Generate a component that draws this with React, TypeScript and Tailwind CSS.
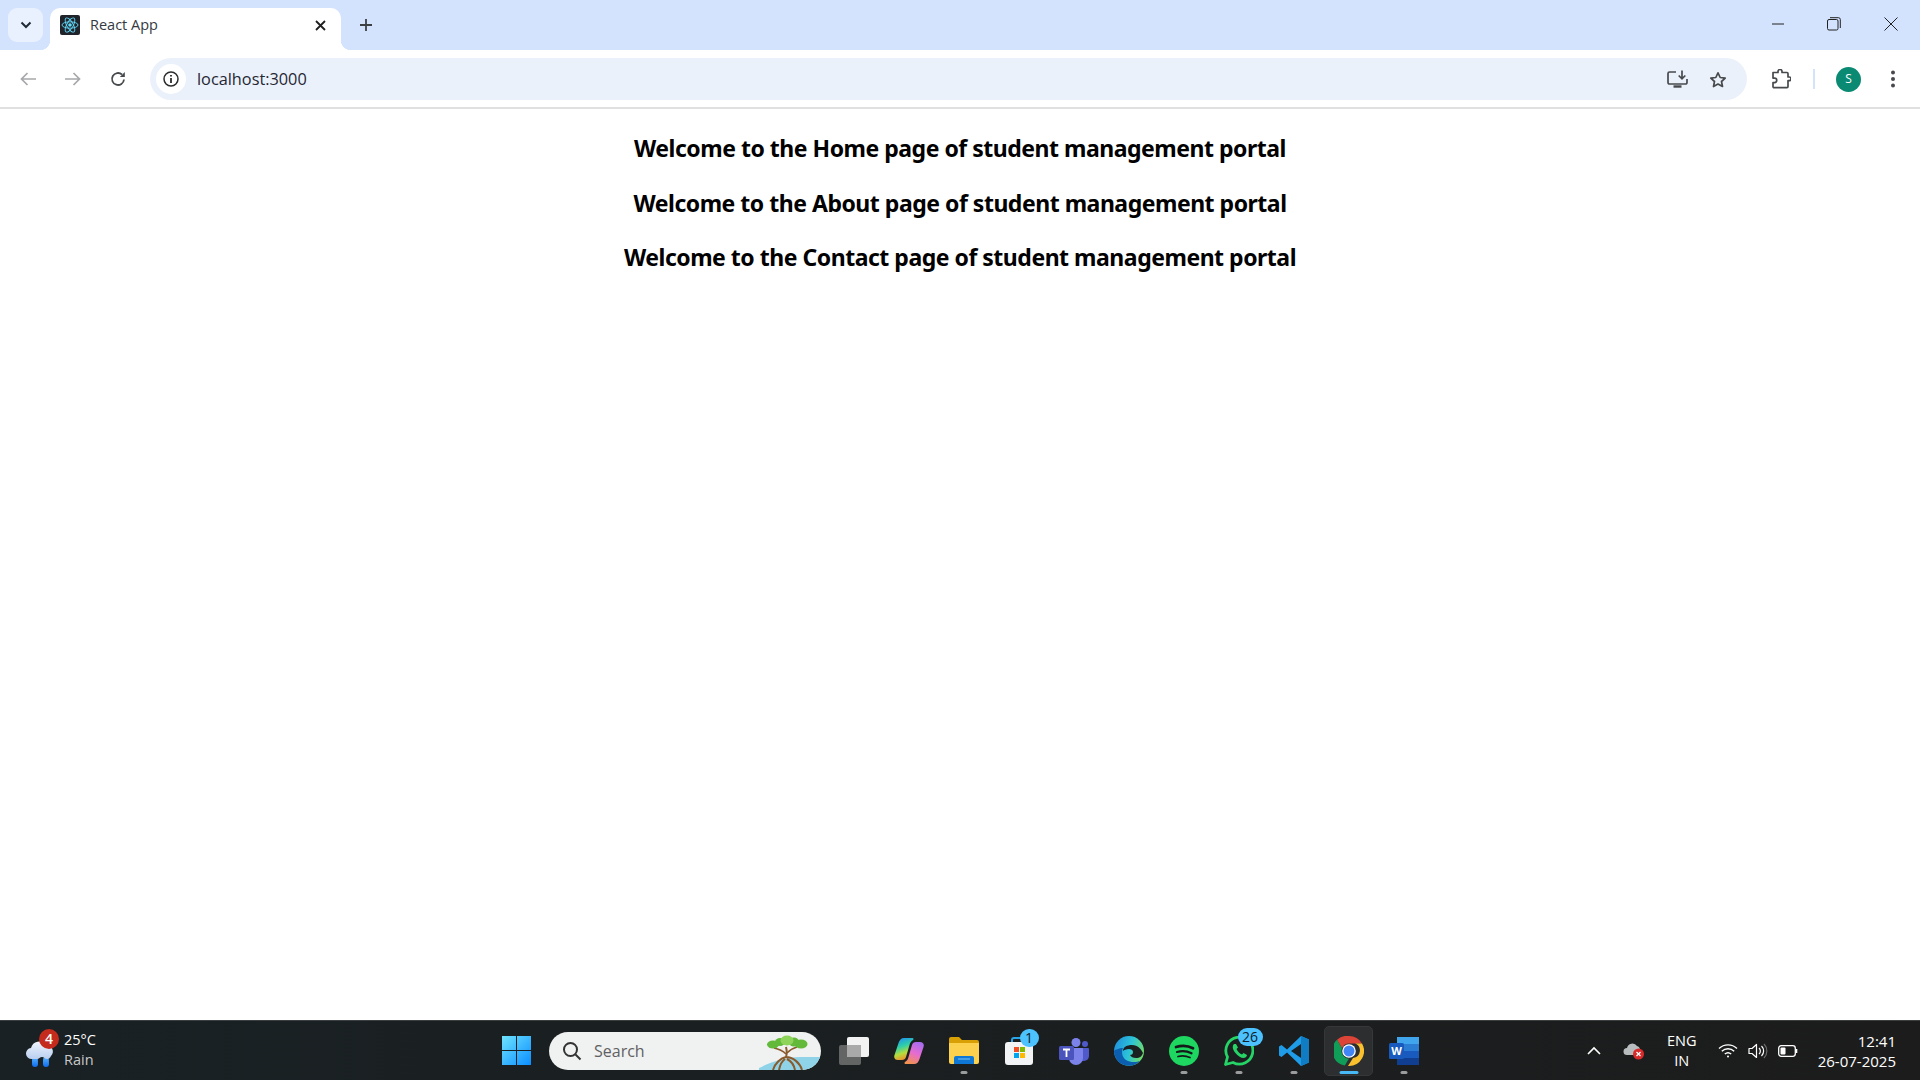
import { ReactNode } from "react";

const ui = "font-['Open_Sans','Noto_Sans',sans-serif]";

const Slot = ({ children, dot, active }: { children: ReactNode; dot?: boolean; active?: boolean }) => (
  <div className="relative flex h-[52px] w-[55px] items-center justify-center">
    {active && <div className="absolute left-[3px] top-[1px] h-[50px] w-[49px] rounded-[5px] border border-[#353839] bg-[#2c2e2f]" />}
    <div className="relative flex items-center justify-center">{children}</div>
    {dot && <div className={`absolute bottom-[3px] left-1/2 h-[3px] -translate-x-1/2 rounded-full ${active ? "w-[19px] bg-[#47b9f5]" : "w-[7px] bg-[#9a9c9d]"}`} />}
  </div>
);

const Badge = ({ children, wide }: { children: ReactNode; wide?: boolean }) => (
  <div className={`absolute top-[-8px] flex h-[18px] items-center justify-center rounded-full bg-[#4cc2ff] text-[14px] text-[#10202a] ${ui} ${wide ? "left-[14px] w-[25px]" : "left-[16px] w-[19px]"}`}>
    {children}
  </div>
);

const ReactLogo = () => (
  <svg width="20" height="20" viewBox="0 0 20 20" className="rounded-[2px] bg-[#20232a]">
    <circle cx="10" cy="10" r="1.8" fill="#61dafb" />
    <g fill="none" stroke="#61dafb" strokeWidth="0.9">
      <ellipse cx="10" cy="10" rx="8" ry="3.2" />
      <ellipse cx="10" cy="10" rx="8" ry="3.2" transform="rotate(60 10 10)" />
      <ellipse cx="10" cy="10" rx="8" ry="3.2" transform="rotate(120 10 10)" />
    </g>
  </svg>
);

const TabStrip = () => (
  <div className="flex h-[50px] bg-[#d3e3fd]">
    <div className="ml-2 mt-2 flex h-[34px] w-[35px] items-center justify-center rounded-[9px] bg-[#e9f0fe]">
      <svg width="12" height="8" viewBox="0 0 12 8" fill="none" stroke="#1f2a37" strokeWidth="2">
        <path d="M1.5 1.5 6 6l4.500-4.500" />
      </svg>
    </div>
    <div className="relative ml-[7px] mt-2 flex h-[42px] w-[291px] items-start rounded-t-[10px] bg-white pl-[10px] pt-[7px]">
      <div className="absolute bottom-0 left-[-10px] h-[10px] w-[10px] bg-[radial-gradient(circle_at_0_0,#d3e3fd_10px,#ffffff_10.5px)]" />
      <div className="absolute bottom-0 right-[-10px] h-[10px] w-[10px] bg-[radial-gradient(circle_at_100%_0,#d3e3fd_10px,#ffffff_10.5px)]" />
      <ReactLogo />
      <span className={`ml-[10px] text-[14.5px] leading-[20px] text-[#333a42] ${ui}`}>React App</span>
      <svg className="absolute right-[15px] top-[12px]" width="11" height="11" viewBox="0 0 11 11" stroke="#1f1f1f" strokeWidth="1.8">
        <path d="M1 1l9 9M10 1l-9 9" />
      </svg>
    </div>
    <svg className="ml-[18px] mt-[18px]" width="14" height="14" viewBox="0 0 14 14" stroke="#3c4043" strokeWidth="1.8">
      <path d="M7 1v12M1 7h12" />
    </svg>
    <div className="ml-auto flex">
      <div className="flex h-[48px] w-[56px] items-center justify-center">
        <svg width="12" height="2" viewBox="0 0 12 2"><path d="M0 1h13" stroke="#222" strokeWidth="1" /></svg>
      </div>
      <div className="flex h-[48px] w-[56px] items-center justify-center">
        <svg width="14" height="14" viewBox="0 0 14 14" fill="none" stroke="#222" strokeWidth="1">
          <rect x="0.5" y="2.5" width="10.5" height="10.5" rx="1.5" />
          <path d="M3 .7h8.500A1.800 1.800 0 0 1 13.300 2.500V11" />
        </svg>
      </div>
      <div className="flex h-[48px] w-[58px] items-center justify-center">
        <svg width="14" height="14" viewBox="0 0 14 14" stroke="#222" strokeWidth="1">
          <path d="M.5.5l13 13M13.500.5l-13 13" />
        </svg>
      </div>
    </div>
  </div>
);

const Toolbar = () => (
  <div className="flex h-[57px] items-center rounded-t-[10px] bg-white pt-[1px]">
    <svg className="ml-[20px]" width="16" height="14" viewBox="0 0 16 14" fill="none" stroke="#a6a8ab" strokeWidth="1.7">
      <path d="M16 7H1.500M7.500 1 1.500 7l6 6" />
    </svg>
    <svg className="ml-[29px]" width="16" height="14" viewBox="0 0 16 14" fill="none" stroke="#a6a8ab" strokeWidth="1.7">
      <path d="M0 7h14.500M8.500 1l6 6-6 6" />
    </svg>
    <svg className="ml-[29px]" width="16" height="16" viewBox="0 0 16 16" fill="none" stroke="#474a4d" strokeWidth="1.800">
      <path d="M14 8.500A6 6 0 1 1 12 3.500" />
      <path d="M14.800 1v5h-5" fill="#474a4d" stroke="none" />
    </svg>
    <div className="ml-[24px] flex h-[42px] w-[1597px] items-center rounded-full bg-[#ebf1fb]">
      <div className="ml-[6px] flex h-[30px] w-[30px] items-center justify-center rounded-full bg-white">
        <svg width="16" height="16" viewBox="0 0 16 16" fill="none" stroke="#2a2c2e" strokeWidth="1.500">
          <circle cx="8" cy="8" r="7" />
          <path d="M8 7v5M8 4v1.600" strokeWidth="1.800" />
        </svg>
      </div>
      <span className={`ml-[11px] pt-[1px] text-[16.3px] text-[#1f2733] ${ui}`}>localhost:3000</span>
      <svg className="ml-auto" width="21" height="18" viewBox="0 0 21 18" fill="none" stroke="#474a4d" strokeWidth="1.700">
        <path d="M9 2H2.500A1.500 1.500 0 0 0 1 3.500v9A1.500 1.500 0 0 0 2.500 14h16a1.500 1.500 0 0 0 1.500-1.500V9" />
        <path d="M15 .5v8M11.700 5.500 15 8.800l3.300-3.300" />
        <path d="M6.500 16.500h8" strokeWidth="2.400" />
      </svg>
      <svg className="ml-[21px] mr-[20px]" width="18" height="17" viewBox="0 0 18 17" fill="none" stroke="#474a4d" strokeWidth="1.700">
        <path d="M9 1.800 11.200 6.500l5 .6-3.700 3.400 1 5L9 13l-4.500 2.500 1-5L1.800 7.100l5-.6z" strokeLinejoin="round" />
      </svg>
    </div>
    <svg className="ml-[24px]" width="20" height="20" viewBox="0 0 20 20" fill="none" stroke="#474a4d" strokeWidth="1.700">
      <path d="M2 3.500h5V2.500a2 2 0 0 1 4 0v1h5a1 1 0 0 1 1 1V8h1.200a1.800 1.800 0 0 1 0 3.600H17v6a1 1 0 0 1-1 1H3a1 1 0 0 1-1-1v-4h1.500a2 2 0 0 0 0-4.500H2z" strokeLinejoin="round" />
    </svg>
    <div className="ml-[22px] h-[20px] w-[2px] bg-[#d3e3fd]" />
    <div className={`ml-[21px] flex h-[25px] w-[25px] items-center justify-center rounded-full bg-[#0b8a73] text-[12px] text-white ${ui}`}>S</div>
    <svg className="ml-[30px]" width="4" height="18" viewBox="0 0 4 18" fill="#474a4d">
      <circle cx="2" cy="2.500" r="2" />
      <circle cx="2" cy="9" r="2" />
      <circle cx="2" cy="15.500" r="2" />
    </svg>
  </div>
);

const Weather = () => (
  <div className="flex items-center pl-[24px]">
    <div className="relative h-[40px] w-[40px]">
      <svg className="absolute left-[1px] top-[8px]" width="32" height="28" viewBox="0 0 32 28">
        <defs>
          <linearGradient id="cloud" x1="0" y1="0" x2="0" y2="1">
            <stop offset="0" stopColor="#eef4fc" />
            <stop offset="1" stopColor="#b9cff0" />
          </linearGradient>
          <linearGradient id="drop" x1="0" y1="0" x2="0" y2="1">
            <stop offset="0" stopColor="#57b3ff" />
            <stop offset="1" stopColor="#0d6bf0" />
          </linearGradient>
        </defs>
        <path d="M10 18c-3 0-3 1-3 7a3 3 0 0 0 6 0c0-6 0-7-3-7zM21 18c-3 0-3 1-3 7a3 3 0 0 0 6 0c0-6 0-7-3-7z" fill="url(#drop)" />
        <path d="M7 20a5.500 5.500 0 0 1-1-11 8.500 8.500 0 0 1 15-3 6.500 6.500 0 0 1 5 11c-1 2-2 3-4 3-2 0-3-2-5-2s-3 2-5 2z" fill="url(#cloud)" />
      </svg>
      <div className={`absolute left-[15px] top-[-2px] flex h-[20px] w-[20px] items-center justify-center rounded-full bg-[#c42b1c] text-[14px] font-semibold text-white ${ui}`}>4</div>
    </div>
    <div className={`-mt-[2px] flex flex-col text-[14.5px] leading-[20px] ${ui}`}>
      <span className="text-white">25°C</span>
      <span className="text-[#c8c9ca]">Rain</span>
    </div>
  </div>
);

const SearchBox = () => (
  <div className="relative ml-[5px] flex h-[38px] w-[272px] items-center overflow-hidden rounded-full bg-[#f0f1f1]">
    <svg className="ml-[13px]" width="20" height="20" viewBox="0 0 20 20" fill="none" stroke="#333" strokeWidth="2">
      <circle cx="8.500" cy="8.500" r="6.500" />
      <path d="m13.500 13.500 5 5" />
    </svg>
    <span className={`ml-[12px] text-[16px] text-[#5f6163] ${ui}`}>Search</span>
    <svg className="absolute right-0 top-0" width="62" height="38" viewBox="0 0 62 38">
      <path d="M0 36c10-5 25-11 42-11h20v13H0z" fill="#8fd3e8" />
      <g fill="none" stroke="#8b5a2b" strokeWidth="2">
        <path d="M27 15c1 4 1 7 0 10-5 1-11 6-13 13M27 25c7 0 14 6 16 13M26 27c-3 2-5 6-6 11M28 27c4 2 7 6 8 11" />
        <path d="M15 16c5 1 9 3 12 6M38 15c-4 1-7 3-10 6" strokeWidth="1.600" />
      </g>
      <g fill="#63b93a">
        <ellipse cx="14" cy="12.500" rx="6" ry="4" />
        <ellipse cx="21" cy="10" rx="5" ry="4" />
        <ellipse cx="42" cy="12" rx="6.500" ry="4.500" />
        <ellipse cx="35" cy="10" rx="5" ry="4.500" />
      </g>
      <ellipse cx="28" cy="8.500" rx="6.500" ry="5" fill="#8ed45a" />
    </svg>
  </div>
);

const Taskbar = () => (
  <div className="grid h-[60px] grid-cols-[1fr_auto_1fr] items-center border-t border-[#3b3e3f] bg-gradient-to-r from-[#192124] to-[#1c1c1c]">
    <Weather />
    <div className="flex items-center">
      <Slot>
        <svg width="29" height="29" viewBox="0 0 29 29">
          <defs>
            <linearGradient id="win" x1="0" y1="0" x2="1" y2="1">
              <stop offset="0" stopColor="#6fe3ff" />
              <stop offset="1" stopColor="#0a8eff" />
            </linearGradient>
          </defs>
          <path d="M0 0h14v14H0zM15 0h14v14H15zM0 15h14v14H0zM15 15h14v14H15z" fill="url(#win)" />
        </svg>
      </Slot>
      <SearchBox />
      <div className="w-[5px]" />
      <Slot>
        <svg width="30" height="28" viewBox="0 0 30 28">
          <rect x="8" y="0" width="22" height="20" rx="2" fill="#f2f2f2" />
          <rect x="0" y="8" width="22" height="20" rx="2" fill="#6b6b6b" fillOpacity="0.9" />
          <rect x="8" y="8" width="14" height="12" fill="#a9a9a9" />
        </svg>
      </Slot>
      <Slot>
        <svg width="30" height="26" viewBox="0 0 30 26">
          <defs>
            <linearGradient id="cop1" x1="0.2" y1="0" x2="0.5" y2="1">
              <stop offset="0" stopColor="#1f8ff0" />
              <stop offset="0.4" stopColor="#2fd0a8" />
              <stop offset="0.7" stopColor="#b6dc3c" />
              <stop offset="1" stopColor="#f28a2c" />
            </linearGradient>
            <linearGradient id="cop2" x1="0.7" y1="0" x2="0.3" y2="1">
              <stop offset="0" stopColor="#a86cf0" />
              <stop offset="0.5" stopColor="#e66cd0" />
              <stop offset="1" stopColor="#f2924e" />
            </linearGradient>
          </defs>
          <path d="M10 0h8c1.500 0 2 1 1 2-2 1-3 3-3.500 5L12 19c-.5 2-2 3-4 3H4c-3 0-4.500-2-3.500-5l4-12C5.500 2 7 0 10 0z" fill="url(#cop1)" />
          <path d="M20 26h-8c-1.500 0-2-1-1-2 2-1 3-3 3.500-5L18 7c.5-2 2-3 4-3h4c3 0 4.500 2 3.500 5l-4 12c-1 3-2.500 5-5.500 5z" fill="url(#cop2)" />
        </svg>
      </Slot>
      <Slot dot>
        <svg width="30" height="27" viewBox="0 0 30 27">
          <path d="M0 2a2 2 0 0 1 2-2h8l3 3h15a2 2 0 0 1 2 2v3H0z" fill="#d9a006" />
          <path d="M0 6h30v19a2 2 0 0 1-2 2H2a2 2 0 0 1-2-2z" fill="#fcd14d" />
          <path d="M5 21a2 2 0 0 1 2-2h16a2 2 0 0 1 2 2v6H5z" fill="#0f78d4" />
          <path d="M9 22h12" stroke="#7cc4f5" strokeWidth="1" />
        </svg>
      </Slot>
      <Slot>
        <svg width="30" height="28" viewBox="0 0 30 28">
          <path d="M8 6V3a2 2 0 0 1 2-2h10" fill="none" stroke="#2aa5e8" strokeWidth="2" />
          <rect x="1" y="5" width="28" height="23" rx="3" fill="#f2f3f4" />
          <path d="M10 10h5v5h-5z" fill="#f25022" />
          <path d="M16 10h5v5h-5z" fill="#7fba00" />
          <path d="M10 16h5v5h-5z" fill="#00a4ef" />
          <path d="M16 16h5v5h-5z" fill="#ffb900" />
        </svg>
        <Badge>1</Badge>
      </Slot>
      <Slot>
        <svg width="30" height="28" viewBox="0 0 30 28">
          <circle cx="17" cy="5.500" r="4.500" fill="#7b83eb" />
          <circle cx="26" cy="7" r="3" fill="#5059c9" />
          <path d="M21 11h8a1 1 0 0 1 1 1v7a5 5 0 0 1-5 5h-4z" fill="#5059c9" />
          <path d="M9 11h14a1 1 0 0 1 1 1v9a7 7 0 0 1-14 0z" fill="#7b83eb" />
          <rect x="0" y="9" width="15" height="14" rx="1.500" fill="#4b53bc" />
          <path d="M4 12.500h7M7.500 12.500V20" stroke="#fff" strokeWidth="1.800" />
        </svg>
      </Slot>
      <Slot>
        <svg width="30" height="30" viewBox="0 0 30 30">
          <defs>
            <linearGradient id="edge" x1="0" y1="0.2" x2="1" y2="0.5">
              <stop offset="0" stopColor="#1f8fdc" />
              <stop offset="0.55" stopColor="#2cc3d8" />
              <stop offset="1" stopColor="#6fdc6a" />
            </linearGradient>
          </defs>
          <circle cx="15" cy="15" r="15" fill="url(#edge)" />
          <path d="M0 15a15 15 0 0 0 26 10c-3 1-9 2-14-1-4-3-5-8-3-12-4 0-8 2-9 3z" fill="#0c5fb0" />
          <path d="M9 15c0-4 4-6 9-6 6 0 9 4 11 8-1 3-3 5-7 5-3 0-5-1-6-3 2 0 3-1 3-3s-2-3-4-3c-3 0-5 1-6 2z" fill="#1a2022" />
        </svg>
      </Slot>
      <Slot dot>
        <svg width="30" height="30" viewBox="0 0 30 30">
          <circle cx="15" cy="15" r="15" fill="#1ed760" />
          <g fill="none" stroke="#16191a" strokeLinecap="round">
            <path d="M7 11c6-1.800 12-1.400 17 1.300" strokeWidth="2.700" />
            <path d="M8 16c5-1.300 10-1 14.500 1.300" strokeWidth="2.200" />
            <path d="M9 20.500c4-1 8-.8 12 1" strokeWidth="1.800" />
          </g>
        </svg>
      </Slot>
      <Slot dot>
        <svg width="30" height="30" viewBox="0 0 30 30" fill="none">
          <path d="M1.500 28.500 3.500 21A13.500 13.500 0 1 1 9 26.500z" stroke="#25d366" strokeWidth="2.800" strokeLinejoin="round" />
          <path d="M10 8c-2 2-1.500 5 1 8.500s6 5.500 8.500 5.500c2 0 3.500-1.500 3.500-3l-3.500-2-1.500 1.500c-2-.5-4.500-3-5.500-5.500l1.500-1.500-2-3.500z" fill="#25d366" />
        </svg>
        <Badge wide>26</Badge>
      </Slot>
      <Slot dot>
        <svg width="30" height="30" viewBox="0 0 30 30">
          <path d="M22 0 30 3.500v23L22 30 8 16.500 2.500 21 0 19.500v-9L2.500 9 8 13.500z" fill="#1e9ce8" />
          <path d="M22 8 12 15l10 7z" fill="#1a2022" />
          <path d="M22 0 30 3.500v23L22 30z" fill="#0f7cc4" />
        </svg>
      </Slot>
      <Slot dot active>
        <svg width="30" height="30" viewBox="0 0 30 30">
          <path d="M15 0a15 15 0 0 1 13 7.500H15a7.500 7.500 0 0 0-7 4.800L3 3.700A15 15 0 0 1 15 0z" fill="#db4437" />
          <path d="M3 3.700 8 12.300a7.500 7.500 0 0 0 7 10.200L10.800 29.400A15 15 0 0 1 3 3.700z" fill="#0f9d58" />
          <path d="M28 7.500A15 15 0 0 1 15 30h-1l5-8a7.500 7.500 0 0 0 2-14.500z" fill="#fbc02d" />
          <circle cx="15" cy="15" r="6.800" fill="#fff" />
          <circle cx="15" cy="15" r="5.500" fill="#4285f4" />
        </svg>
      </Slot>
      <Slot dot>
        <svg width="30" height="28" viewBox="0 0 30 28">
          <rect x="8" y="0" width="22" height="28" rx="1.500" fill="#2b7cd3" />
          <path d="M8 0h22v7H8z" fill="#41a5ee" />
          <path d="M8 14h22v7H8z" fill="#185abd" />
          <path d="M8 21h22v7H8z" fill="#103f91" />
          <rect x="0" y="6" width="15" height="16" rx="1.500" fill="#185abd" />
          <text x="7.500" y="18" textAnchor="middle" fontSize="11" fontWeight="700" fill="#fff" fontFamily="Open Sans">W</text>
        </svg>
      </Slot>
    </div>
    <div className={`flex items-center justify-end text-white ${ui}`}>
      <svg width="14" height="9" viewBox="0 0 14 9" fill="none" stroke="#fff" strokeWidth="1.600">
        <path d="m1 8 6-6 6 6" />
      </svg>
      <svg className="ml-[22px]" width="22" height="18" viewBox="0 0 22 18">
        <path d="M4 13a3.500 3.500 0 0 1 0-7 5.500 5.500 0 0 1 10-2 4 4 0 0 1 3 3v6z" fill="#b9bcbe" />
        <circle cx="15.500" cy="12" r="5.500" fill="#d92b2b" />
        <path d="m13.500 10 4 4m0-4-4 4" stroke="#fff" strokeWidth="1.300" />
      </svg>
      <div className="ml-[17px] flex w-[40px] flex-col items-center text-[14.5px] leading-[20px]">
        <span>ENG</span>
        <span>IN</span>
      </div>
      <svg className="ml-[16px]" width="20" height="15" viewBox="0 0 20 15" fill="none" stroke="#fff" strokeWidth="1.400">
        <path d="M1 5.500a13 13 0 0 1 18 0M3.800 8.300a9 9 0 0 1 12.400 0M6.800 11a5 5 0 0 1 6.400 0" />
        <circle cx="10" cy="13.500" r="1" fill="#fff" stroke="none" />
      </svg>
      <svg className="ml-[10px]" width="20" height="16" viewBox="0 0 20 16" fill="none" stroke="#fff" strokeWidth="1.200">
        <path d="M1 5.500h3L8.500 1.500v13L4 10.500H1z" strokeLinejoin="round" />
        <path d="M11 5a4 4 0 0 1 0 6M13.500 3a7 7 0 0 1 0 10" />
        <path d="M16 1a10 10 0 0 1 0 14" stroke="#6a6a6a" />
      </svg>
      <svg className="ml-[10px]" width="20" height="12" viewBox="0 0 20 12" fill="none" stroke="#fff" strokeWidth="1.300">
        <rect x="0.700" y="0.700" width="16.600" height="10.600" rx="2.500" />
        <path d="M18.500 4v4" strokeWidth="1.600" />
        <rect x="2.500" y="2.500" width="5" height="7" rx="1" fill="#fff" stroke="none" />
      </svg>
      <div className="ml-[20px] mr-[24px] flex flex-col items-end text-[15px] leading-[20px]">
        <span>12:41</span>
        <span>26-07-2025</span>
      </div>
    </div>
  </div>
);

const headings = ["Home", "About", "Contact"];

const App = () => {
  return (
    <div className="flex h-[1080px] w-[1920px] flex-col overflow-hidden bg-white">
      <TabStrip />
      <Toolbar />
      <main className="flex-1 border-t-2 border-[#e0e0e0] pt-[23px]">
        {headings.map((name) => (
          <h2
            key={name}
            className="mb-[22.500px] text-center font-['Noto_Sans',sans-serif] text-[23px] leading-[32px] font-bold tracking-[-0.48px] text-black"
          >
            Welcome to the {name} page of student management portal
          </h2>
        ))}
      </main>
      <Taskbar />
    </div>
  );
};

export default App;
